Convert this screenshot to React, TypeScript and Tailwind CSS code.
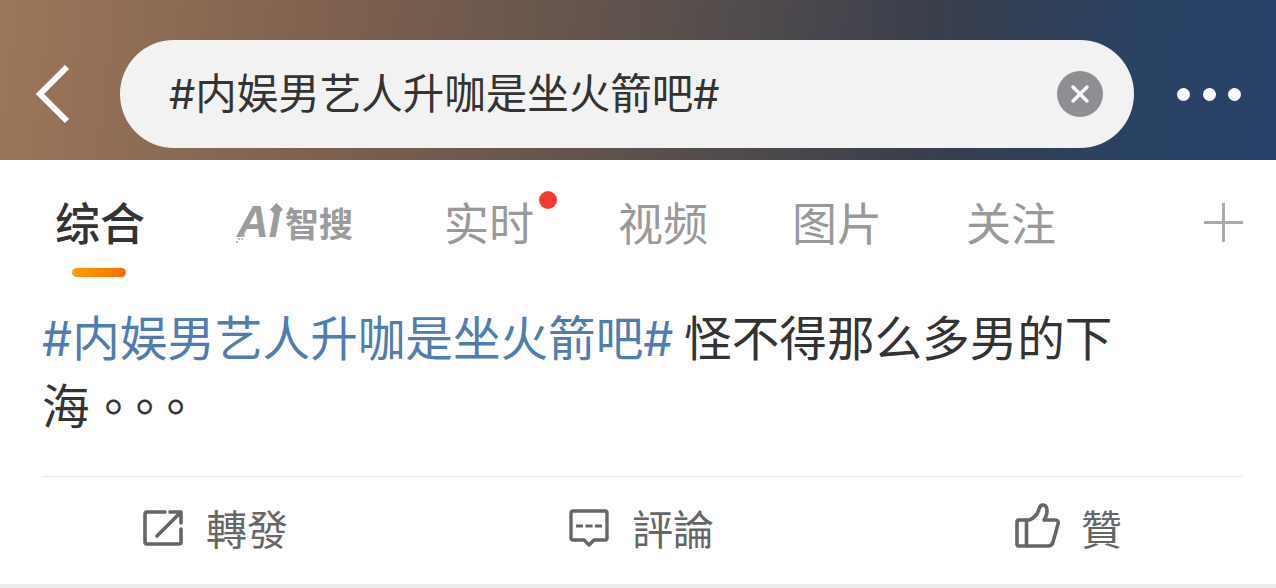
export default function App() {
  const sc = { fontFamily: '"Noto Sans CJK SC", sans-serif' };
  const hash = { fontFamily: 'Inter, sans-serif' };
  return (
    <div className="w-[1276px] h-[588px] bg-white overflow-hidden flex flex-col" style={sc}>
      <header className="h-[160px] shrink-0 flex items-start pt-[40px] bg-[linear-gradient(97deg,#9c765a_0%,#7f604e_26%,#5a504c_52%,#3a3f4c_72%,#2a4263_88%,#28426a_100%)]">
        <div className="w-[120px] h-[108px] flex items-center pl-[34px]">
          <svg width="38" height="60" viewBox="0 0 38 60" fill="none">
            <path d="M33 3 L6 30 L33 57" stroke="#fff" strokeWidth="6" />
          </svg>
        </div>
        <div className="w-[1014px] h-[108px] rounded-[54px] bg-[#f2f2f2] flex items-center pl-[49px] pr-[31px]">
          <span className="flex-1 text-[41.5px] leading-[56px] text-[#333333] whitespace-nowrap -mt-[4px]"><span style={hash}>#</span>内娱男艺人升咖是坐火箭吧<span style={hash}>#</span></span>
          <div className="w-[46px] h-[46px] rounded-full bg-[#8e8e93] flex items-center justify-center">
            <svg width="18" height="18" viewBox="0 0 18 18"><path d="M2 2 L16 16 M16 2 L2 16" stroke="#fff" strokeWidth="3.4" strokeLinecap="round" /></svg>
          </div>
        </div>
        <div className="flex-1 h-[108px] flex items-center pl-[43px] gap-[12.5px]">
          <div className="w-[13px] h-[13px] rounded-full bg-white" />
          <div className="w-[13px] h-[13px] rounded-full bg-white" />
          <div className="w-[13px] h-[13px] rounded-full bg-white" />
        </div>
      </header>

      <nav className="h-[122px] shrink-0 relative flex items-start pl-[55px] pt-[36px] text-[45px] leading-[52px] text-[#999999] whitespace-nowrap">
        <div className="w-[90px] relative text-[#333333] font-medium">
          综合
          <div className="absolute left-[17px] top-[72px] w-[54px] h-[9px] rounded-full bg-[linear-gradient(90deg,#ffa200,#ff6a00)]" />
        </div>
        <div className="ml-[91px] w-[117px] h-[52px] flex items-center text-[#9b9b9b] mt-[1px]">
          <div className="relative w-[50px] h-[52px] overflow-visible">
            <span className="absolute left-[1px] top-[-1px] text-[44px] leading-[52px] font-bold italic" style={{ fontFamily: '"Liberation Sans", sans-serif' }}>Aı</span>
            <svg className="absolute left-[34px] top-[6px]" width="13" height="13" viewBox="0 0 13 13"><path d="M6.5 0 L13 6.5 L6.5 13 L0 6.5 Z" fill="#9b9b9b" /></svg>
            <svg className="absolute left-[0px] top-[33px]" width="10" height="14" viewBox="0 0 10 14" fill="#aaaaaa">
              <circle cx="8" cy="2" r="1.2" /><circle cx="5" cy="5" r="1.2" /><circle cx="8" cy="6" r="1" /><circle cx="3" cy="9" r="1.1" /><circle cx="6" cy="9" r="1" /><circle cx="1" cy="12" r="1" />
            </svg>
          </div>
          <span className="text-[34px] leading-[52px] font-bold">智搜</span>
        </div>
        <div className="ml-[91px] w-[90px] relative">
          实时
          <div className="absolute left-[95px] top-[-5px] w-[18px] h-[18px] rounded-full bg-[#fa3a32]" />
        </div>
        <div className="ml-[84px] w-[90px]">视频</div>
        <div className="ml-[84px] w-[90px]">图片</div>
        <div className="ml-[84px] w-[90px]">关注</div>
        <div className="absolute left-[1204px] top-[43px] w-[39px] h-[39px] flex items-center justify-center">
          <svg width="39" height="39" viewBox="0 0 39 39"><path d="M0 19.5 H39 M19.5 0 V39" stroke="#aaaaaa" strokeWidth="3" /></svg>
        </div>
      </nav>

      <article className="h-[195px] shrink-0 ml-[42px] mr-[34px] border-b border-[#e5e5e5] text-[47.6px] leading-[65px] text-[#333333]">
        <div className="pt-[21px] w-[1100px]">
          <span className="text-[#507daf]"><span style={hash}>#</span>内娱男艺人升咖是坐火箭吧<span style={hash}>#</span></span>
          <span> 怪不得那么多男的下</span>
          <br />
          <span>海</span>
          <span className="tracking-[-16.5px] align-[-1px] leading-none" style={{ fontFamily: '"Noto Sans CJK TC", sans-serif' }}>。。。</span>
        </div>
      </article>

      <footer className="flex-1 flex items-center pl-[143px] pb-[8px] text-[41px] leading-[52px] text-[#666666] border-b-[4px] border-[#ececec]">
        <div className="w-[426px] flex items-center gap-[23px]">
          <svg className="mt-[2px]" width="40" height="36" viewBox="0 0 40 36" fill="none" stroke="#666" strokeWidth="3.6" strokeLinecap="round" strokeLinejoin="round">
            <path d="M22 2 H4 Q2 2 2 4 V32 Q2 34 4 34 H36 Q38 34 38 32 V19" />
            <path d="M14 26 L37 3 M27 2 H38 V13" />
          </svg>
          <span>轉發</span>
        </div>
        <div className="w-[446px] flex items-center gap-[23px]">
          <svg className="mt-[2px]" width="40" height="38" viewBox="0 0 40 38" fill="none" stroke="#666" strokeWidth="3.4" strokeLinejoin="round">
            <path d="M4 2 H36 Q38 2 38 4 V29 Q38 31 36 31 H25 L20 36 L15 31 H4 Q2 31 2 29 V4 Q2 2 4 2 Z" />
            <path d="M7 17 H14 M16.5 17 H23.5 M26 17 H33" strokeWidth="3" />
          </svg>
          <span>評論</span>
        </div>
        <div className="flex items-center gap-[21px]">
          <svg className="-mt-[2px]" width="45" height="46" viewBox="0 0 45 46" fill="none" stroke="#666" strokeWidth="3.6" strokeLinecap="round" strokeLinejoin="round">
            <path d="M2 19 Q2 17 4 17 H14 Q22 14 24 6 Q25 2 28 2 Q32 2 32 8 Q32 13 29 17 H40 Q44 17 43 21 L38 39 Q37 43 33 43 H4 Q2 43 2 41 Z" />
            <path d="M11.5 17 V43" />
          </svg>
          <span>贊</span>
        </div>
      </footer>
    </div>
  );
}
